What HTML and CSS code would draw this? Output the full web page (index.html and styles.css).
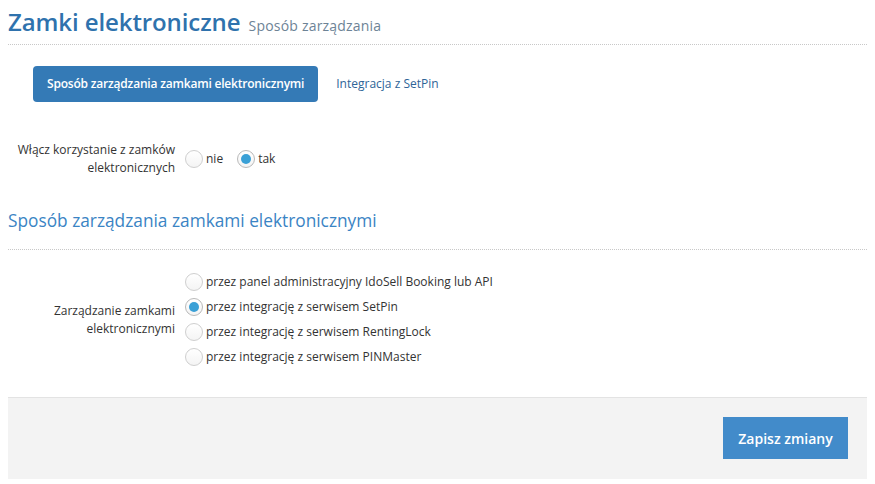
FILE: index.html
```html
<!DOCTYPE html>
<html lang="pl">
<head>
  <meta charset="UTF-8">
  <title>Zamki elektroniczne</title>
  <link rel="stylesheet" href="styles.css">
</head>
<body>

  <div class="page-header">
    <h1>Zamki elektroniczne <small>Sposób zarządzania</small></h1>
  </div>

  <div class="tabs">
    <a class="tab active" href="#">Sposób zarządzania zamkami elektronicznymi</a>
    <a class="tab" href="#">Integracja z SetPin</a>
  </div>

  <div class="form-row first-row">
    <div class="form-label">Włącz korzystanie z zamków elektronicznych</div>
    <div class="form-control inline">
      <label class="radio"><span class="radio-box"></span>nie</label>
      <label class="radio"><span class="radio-box checked"></span>tak</label>
    </div>
  </div>

  <h3 class="section-title">Sposób zarządzania zamkami elektronicznymi</h3>

  <div class="form-row list-row">
    <div class="form-label">Zarządzanie zamkami elektronicznymi</div>
    <div class="form-control stacked">
      <label class="radio"><span class="radio-box"></span>przez panel administracyjny IdoSell Booking lub API</label>
      <label class="radio"><span class="radio-box checked"></span>przez integrację z serwisem SetPin</label>
      <label class="radio"><span class="radio-box"></span>przez integrację z serwisem RentingLock</label>
      <label class="radio"><span class="radio-box"></span>przez integrację z serwisem PINMaster</label>
    </div>
  </div>

  <div class="form-actions">
    <button class="btn-save">Zapisz zmiany</button>
  </div>

</body>
</html>
```

FILE: styles.css
```css
body {
  margin: 8px;
  font-family: "Open Sans", Arial, sans-serif;
  font-size: 12px;
  color: #333;
  background: #fff;
}

.page-header {
  border-bottom: 1px dotted #c8c8c8;
  height: 36px;
}

h1 {
  margin: 0;
  font-size: 24px;
  font-weight: 600;
  line-height: 28px;
  color: #2f72ad;
  letter-spacing: -0.1px;
}

h1 small {
  font-size: 14px;
  font-weight: 400;
  color: #6d8396;
  letter-spacing: 0.2px;
  margin-left: 2px;
}

.tabs {
  display: flex;
  align-items: center;
  margin: 21px 0 0 25px;
}

.tab {
  display: block;
  padding: 0 18px;
  height: 36px;
  line-height: 36px;
  font-size: 12px;
  color: #2e6497;
  text-decoration: none;
  border-radius: 4px;
}

.tab.active {
  padding: 0 14px;
  background: #347ab6;
  color: #fff;
  font-weight: 600;
  letter-spacing: -0.2px;
}

.form-row {
  display: grid;
  grid-template-columns: 167px auto;
  column-gap: 10px;
  align-items: center;
}

.first-row {
  margin-top: 39px;
}

.form-label {
  text-align: right;
  line-height: 18px;
}

.first-row .form-label {
  padding-left: 9px;
}

.list-row .form-label {
  padding-left: 40px;
}

.form-control.inline {
  display: flex;
  gap: 14px;
}

.form-control.stacked {
  display: flex;
  flex-direction: column;
  gap: 7px;
}

.radio {
  display: flex;
  align-items: center;
  line-height: 18px;
}

.radio-box {
  box-sizing: border-box;
  width: 18px;
  height: 18px;
  margin-right: 3px;
  border: 1px solid #cfcfcf;
  border-radius: 50%;
  background: linear-gradient(#fff, #f4f4f4);
  position: relative;
}

.radio-box.checked {
  border-color: #b9b9b9;
}

.radio-box.checked::after {
  content: "";
  position: absolute;
  left: 3px;
  top: 3px;
  width: 10px;
  height: 10px;
  border-radius: 50%;
  background: #3aa0d6;
}

.section-title {
  margin: 32px 0 0;
  padding-bottom: 16px;
  border-bottom: 1px dotted #c8c8c8;
  font-size: 17.3px;
  font-weight: 400;
  line-height: 24px;
  color: #3a84c4;
}

.list-row {
  margin-top: 23px;
}

.form-actions {
  display: flex;
  justify-content: flex-end;
  margin-top: 31px;
  padding: 19px 19px 20px 0;
  background: #f3f3f3;
  border-top: 1px solid #e3e3e3;
}

.btn-save {
  width: 125px;
  height: 42px;
  border: none;
  background: #428bca;
  color: #fff;
  font-family: "Open Sans", Arial, sans-serif;
  font-size: 14px;
  font-weight: 600;
}
```
